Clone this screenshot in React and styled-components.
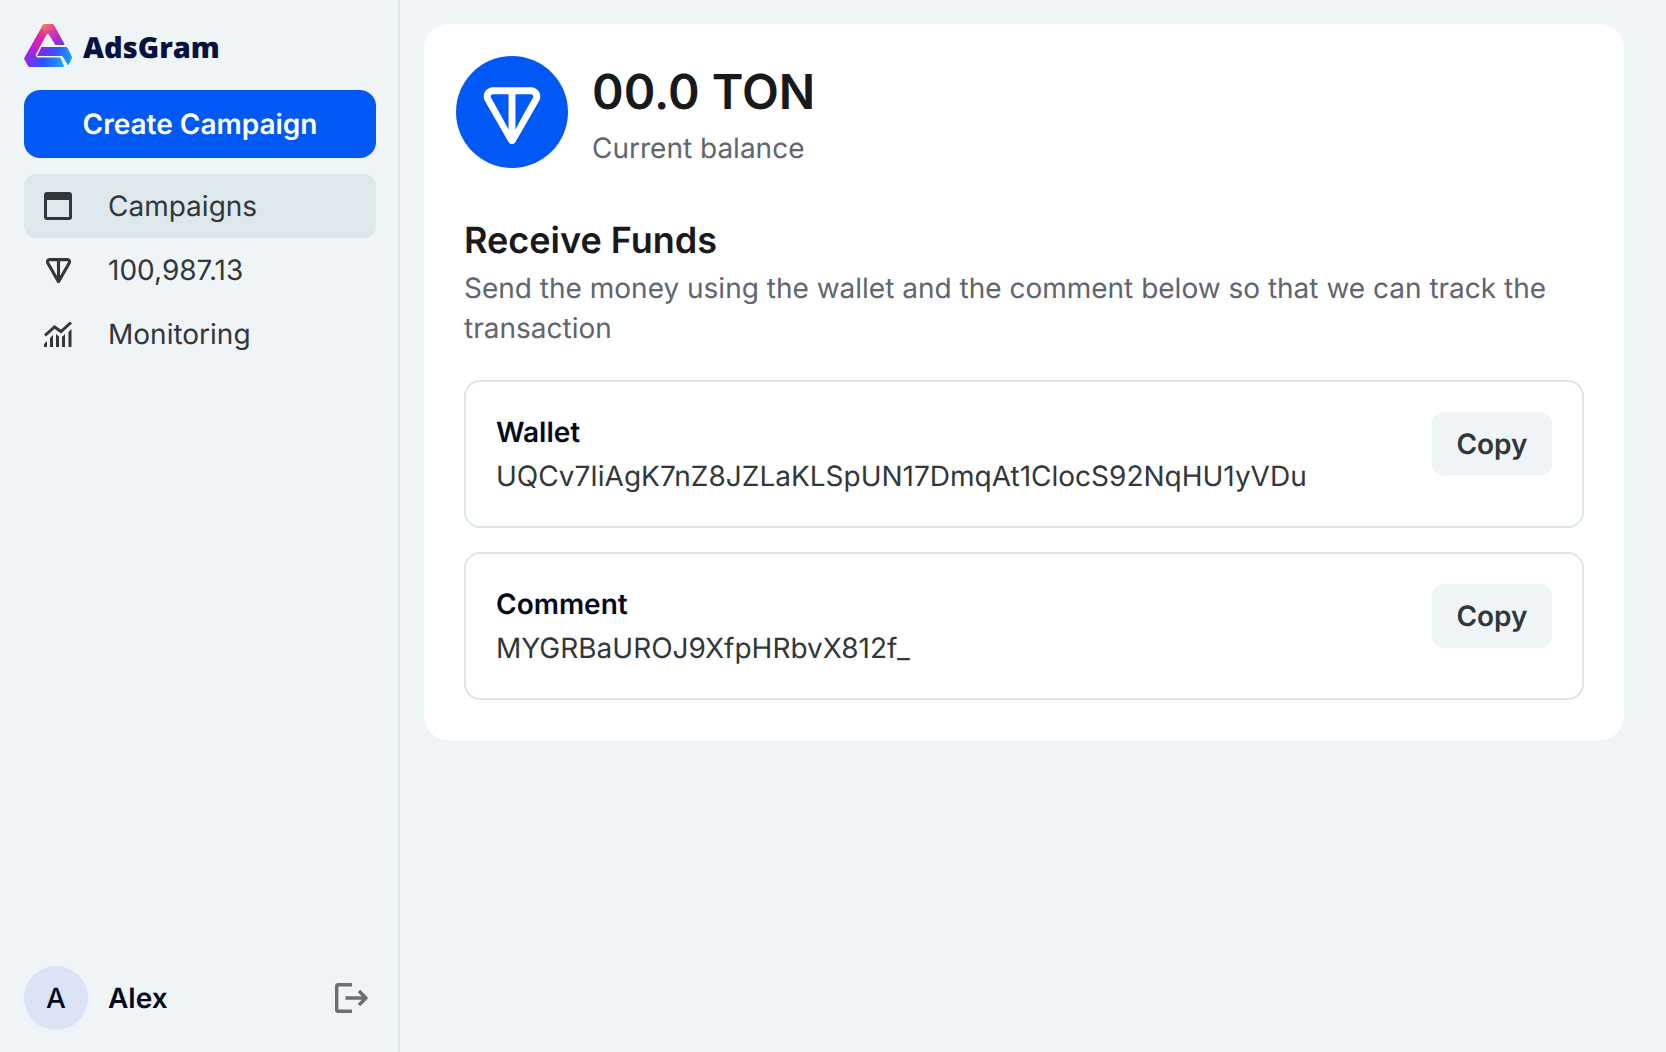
import React from 'react';
import styled, { createGlobalStyle } from 'styled-components';

const color = {
  page: '#eff4f7',
  card: '#ffffff',
  line: '#dce7ec',
  active: '#dde8ec',
  brand: '#0059f5',
  heading: '#19191b',
  text: '#323739',
  muted: '#60656f',
  strong: '#050a1a',
  avatar: '#dae4f5',
};

const GlobalStyle = createGlobalStyle`
  *, *::before, *::after { box-sizing: border-box; }
  body {
    margin: 0;
    background: ${color.page};
    color: ${color.text};
    font-family: Inter, "Liberation Sans", sans-serif;
    font-size: 28px;
    line-height: 40px;
    text-rendering: geometricPrecision;
  }
  button { font: inherit; text-rendering: inherit; cursor: pointer; border: 0; }
  h1, h2, h3, p { margin: 0; }
`;

const Layout = styled.div`
  display: flex;
  min-height: 100vh;
`;

const Sidebar = styled.aside`
  display: flex;
  flex-direction: column;
  flex: none;
  width: 400px;
  padding: 24px 22px 22px 24px;
  border-right: 2px solid ${color.line};
`;

const Brand = styled.a`
  display: flex;
  align-items: flex-start;
  gap: 11px;
  color: #06133f;
  text-decoration: none;
`;

const BrandName = styled.span`
  font-family: "Open Sans", "Noto Sans", sans-serif;
  font-size: 29px;
  font-weight: 800;
  line-height: 48px;
`;

const CreateButton = styled.button`
  height: 68px;
  margin: 18px 0 16px;
  border-radius: 16px;
  background: ${color.brand};
  color: #fff;
  font-weight: 600;
`;

const Nav = styled.nav`
  display: flex;
  flex-direction: column;
`;

const NavItem = styled.a`
  display: flex;
  align-items: center;
  gap: 32px;
  height: 64px;
  padding: 0 16px;
  border-radius: 12px;
  background: ${({ $active }) => ($active ? color.active : 'transparent')};
  color: ${color.text};
  text-decoration: none;
`;

const IconSlot = styled.span`
  display: flex;
  justify-content: center;
  flex: none;
  width: 36px;
`;

const User = styled.div`
  display: flex;
  align-items: center;
  gap: 20px;
  margin-top: auto;
  color: ${color.strong};
`;

const Avatar = styled.span`
  display: flex;
  align-items: center;
  justify-content: center;
  width: 64px;
  height: 64px;
  border-radius: 50%;
  background: ${color.avatar};
  font-weight: 500;
`;

const UserName = styled.span`
  flex: 1;
  font-weight: 600;
`;

const LogoutButton = styled.button`
  display: flex;
  padding: 7px;
  background: none;
  color: #6b7075;
`;

const Main = styled.main`
  flex: 1;
  min-width: 0;
  padding: 24px 42px 24px 24px;
`;

const Card = styled.section`
  padding: 32px;
  border-radius: 24px;
  background: ${color.card};
`;

const Balance = styled.header`
  display: flex;
  gap: 24px;
`;

const Amount = styled.h1`
  color: ${color.heading};
  font-size: 48px;
  font-weight: 600;
  line-height: 72px;
`;

const Muted = styled.p`
  color: ${color.muted};
`;

const Funds = styled.div`
  padding: 48px 8px 8px;
`;

const Title = styled.h2`
  margin-bottom: 4px;
  color: ${color.heading};
  font-size: 36px;
  font-weight: 600;
  line-height: 48px;
`;

const Fields = styled.div`
  display: grid;
  gap: 24px;
  margin-top: 32px;
`;

const Field = styled.div`
  display: flex;
  align-items: flex-start;
  justify-content: space-between;
  gap: 24px;
  padding: 30px;
  border: 2px solid ${color.line};
  border-radius: 16px;
`;

const FieldText = styled.div`
  display: grid;
  gap: 4px;
  min-width: 0;
  overflow-wrap: anywhere;
`;

const FieldLabel = styled.h3`
  color: ${color.strong};
  font-size: 28px;
  font-weight: 600;
`;

const CopyButton = styled.button`
  flex: none;
  min-width: 120px;
  height: 64px;
  padding: 0 24px;
  border-radius: 12px;
  background: ${color.page};
  color: ${color.text};
  font-weight: 600;
`;

function Logo() {
  return (
    <svg width="48" height="44" viewBox="0 0 48 44" aria-hidden="true">
      <defs>
        <linearGradient id="logoOuter" x1="26" y1="0" x2="12" y2="44" gradientUnits="userSpaceOnUse">
          <stop offset="0" stopColor="#f4774e" />
          <stop offset="0.35" stopColor="#e022a8" />
          <stop offset="0.65" stopColor="#b51fd8" />
          <stop offset="1" stopColor="#5a3df8" />
        </linearGradient>
        <linearGradient id="logoRight" x1="20" y1="0" x2="40" y2="22" gradientUnits="userSpaceOnUse">
          <stop offset="0" stopColor="#f4804e" />
          <stop offset="0.45" stopColor="#d92fb4" />
          <stop offset="1" stopColor="#5b35e8" />
        </linearGradient>
        <linearGradient id="logoBar" x1="14" y1="28" x2="48" y2="36" gradientUnits="userSpaceOnUse">
          <stop offset="0" stopColor="#8a26e0" />
          <stop offset="0.45" stopColor="#3f4cf4" />
          <stop offset="1" stopColor="#0fa4ff" />
        </linearGradient>
        <linearGradient id="logoBase" x1="0" y1="34" x2="42" y2="43" gradientUnits="userSpaceOnUse">
          <stop offset="0" stopColor="#a025e0" />
          <stop offset="0.45" stopColor="#2a52fb" />
          <stop offset="1" stopColor="#18b4ff" />
        </linearGradient>
      </defs>
      <path d="M20.500 0H28q1.200 0 1.800 1L40.300 20q.4 1-.8 1H31.500L25 10.500Q23.800 9 22.600 10.500L11.500 31l2.500 4H4L.4 35.500Q0 34.500.5 33.500L18.800 1q.6-1 1.700-1Z" fill="url(#logoOuter)" />
      <path d="M20.500 0H28q1.200 0 1.800 1L40.300 20q.4 1-.8 1H31.500L25 10.500Q23.800 9 22.600 10.500L17.500 2.500Z" fill="url(#logoRight)" />
      <path d="M11.500 31 12.500 33.500H35q1.200 0 1.800 1L40 42q.3 1-.8 1H5.800Q4.600 43 4 42L.5 35.800 2 32Z" fill="url(#logoBase)" />
      <path d="M17.500 23H42q1 0 1.600 1L47.700 32.500q.5 1 0 2L44.800 40.500q-.6 1-1.200 0L39 33q-.5-1-1.600-1H13Z" fill="url(#logoBar)" />
    </svg>
  );
}

function TonMark({ size, stroke }) {
  return (
    <svg width={size} height={size} viewBox="0 0 56 56" fill="none" stroke="currentColor" strokeWidth={stroke} strokeLinejoin="round" aria-hidden="true">
      <path d="M8 3.500H48C52 3.500 54 7.500 52 11L28 53 4 11C2 7.500 4 3.500 8 3.500ZM28 3.500V50" />
    </svg>
  );
}

function TonBadge() {
  return (
    <svg width="112" height="112" viewBox="0 0 56 56" aria-hidden="true">
      <circle cx="28" cy="28" r="28" fill={color.brand} />
      <path
        d="M37.560 15.628H18.439c-3.516 0-5.744 3.792-3.975 6.858l11.801 20.455c.77 1.335 2.700 1.335 3.470 0l11.803-20.455c1.767-3.061-.461-6.858-3.975-6.858h-.003ZM26.255 36.807l-2.570-4.974-6.201-11.091c-.409-.71.096-1.620.952-1.620h7.817v17.687l.002-.002Zm12.254-16.067-6.199 11.095-2.570 4.972V19.120h7.817c.856 0 1.361.91.952 1.620Z"
        fill="#fff"
      />
    </svg>
  );
}

function WindowIcon() {
  return (
    <svg width="28" height="28" viewBox="0 0 28 28" aria-hidden="true">
      <path fillRule="evenodd" d="M3 0H25a3 3 0 0 1 3 3V25a3 3 0 0 1-3 3H3a3 3 0 0 1-3-3V3a3 3 0 0 1 3-3ZM3 8V25H25V8Z" fill="currentColor" />
    </svg>
  );
}

function MonitoringIcon() {
  return (
    <svg width="28" height="26" viewBox="0 0 28 26" aria-hidden="true">
      <path d="M1 14.500 10.500 6 17 10.500 27 1.500" fill="none" stroke="currentColor" strokeWidth="3" />
      <path
        d="M0 26V23L3 20V26ZM6 26V17L9 14V26ZM12 26V13L15 15.500V26ZM18 26V16L21 13V26ZM24.500 26V11L27.500 8V26Z"
        fill="currentColor"
      />
    </svg>
  );
}

function LogoutIcon() {
  return (
    <svg width="34" height="30" viewBox="0 0 34 30" fill="none" stroke="currentColor" strokeWidth="3.400" strokeLinejoin="round" aria-hidden="true">
      <path d="M17 1.700H3.200a1.500 1.500 0 0 0-1.500 1.500V26.800A1.500 1.500 0 0 0 3.200 28.300H17" />
      <path d="M10.500 15H31M24 8 31 15 24 22" />
    </svg>
  );
}

const navItems = [
  { label: 'Campaigns', icon: <WindowIcon />, active: true },
  { label: '100,987.13', icon: <TonMark size={25} stroke={7} /> },
  { label: 'Monitoring', icon: <MonitoringIcon /> },
];

const fields = [
  { label: 'Wallet', value: 'UQCv7IiAgK7nZ8JZLaKLSpUN17DmqAt1ClocS92NqHU1yVDu' },
  { label: 'Comment', value: 'MYGRBaUROJ9XfpHRbvX812f_' },
];

export default function App() {
  return (
    <>
      <GlobalStyle />
      <Layout>
        <Sidebar>
          <Brand href="#">
            <Logo />
            <BrandName>AdsGram</BrandName>
          </Brand>
          <CreateButton type="button">Create Campaign</CreateButton>
          <Nav>
            {navItems.map((item) => (
              <NavItem key={item.label} href="#" $active={item.active} aria-current={item.active ? 'page' : undefined}>
                <IconSlot>{item.icon}</IconSlot>
                {item.label}
              </NavItem>
            ))}
          </Nav>
          <User>
            <Avatar>A</Avatar>
            <UserName>Alex</UserName>
            <LogoutButton type="button" aria-label="Log out">
              <LogoutIcon />
            </LogoutButton>
          </User>
        </Sidebar>
        <Main>
          <Card>
            <Balance>
              <TonBadge />
              <div>
                <Amount>00.0 TON</Amount>
                <Muted>Current balance</Muted>
              </div>
            </Balance>
            <Funds>
              <Title>Receive Funds</Title>
              <Muted>Send the money using the wallet and the comment below so that we can track the transaction</Muted>
              <Fields>
                {fields.map((field) => (
                  <Field key={field.label}>
                    <FieldText>
                      <FieldLabel>{field.label}</FieldLabel>
                      <p>{field.value}</p>
                    </FieldText>
                    <CopyButton type="button" aria-label={`Copy ${field.label.toLowerCase()}`}>Copy</CopyButton>
                  </Field>
                ))}
              </Fields>
            </Funds>
          </Card>
        </Main>
      </Layout>
    </>
  );
}
